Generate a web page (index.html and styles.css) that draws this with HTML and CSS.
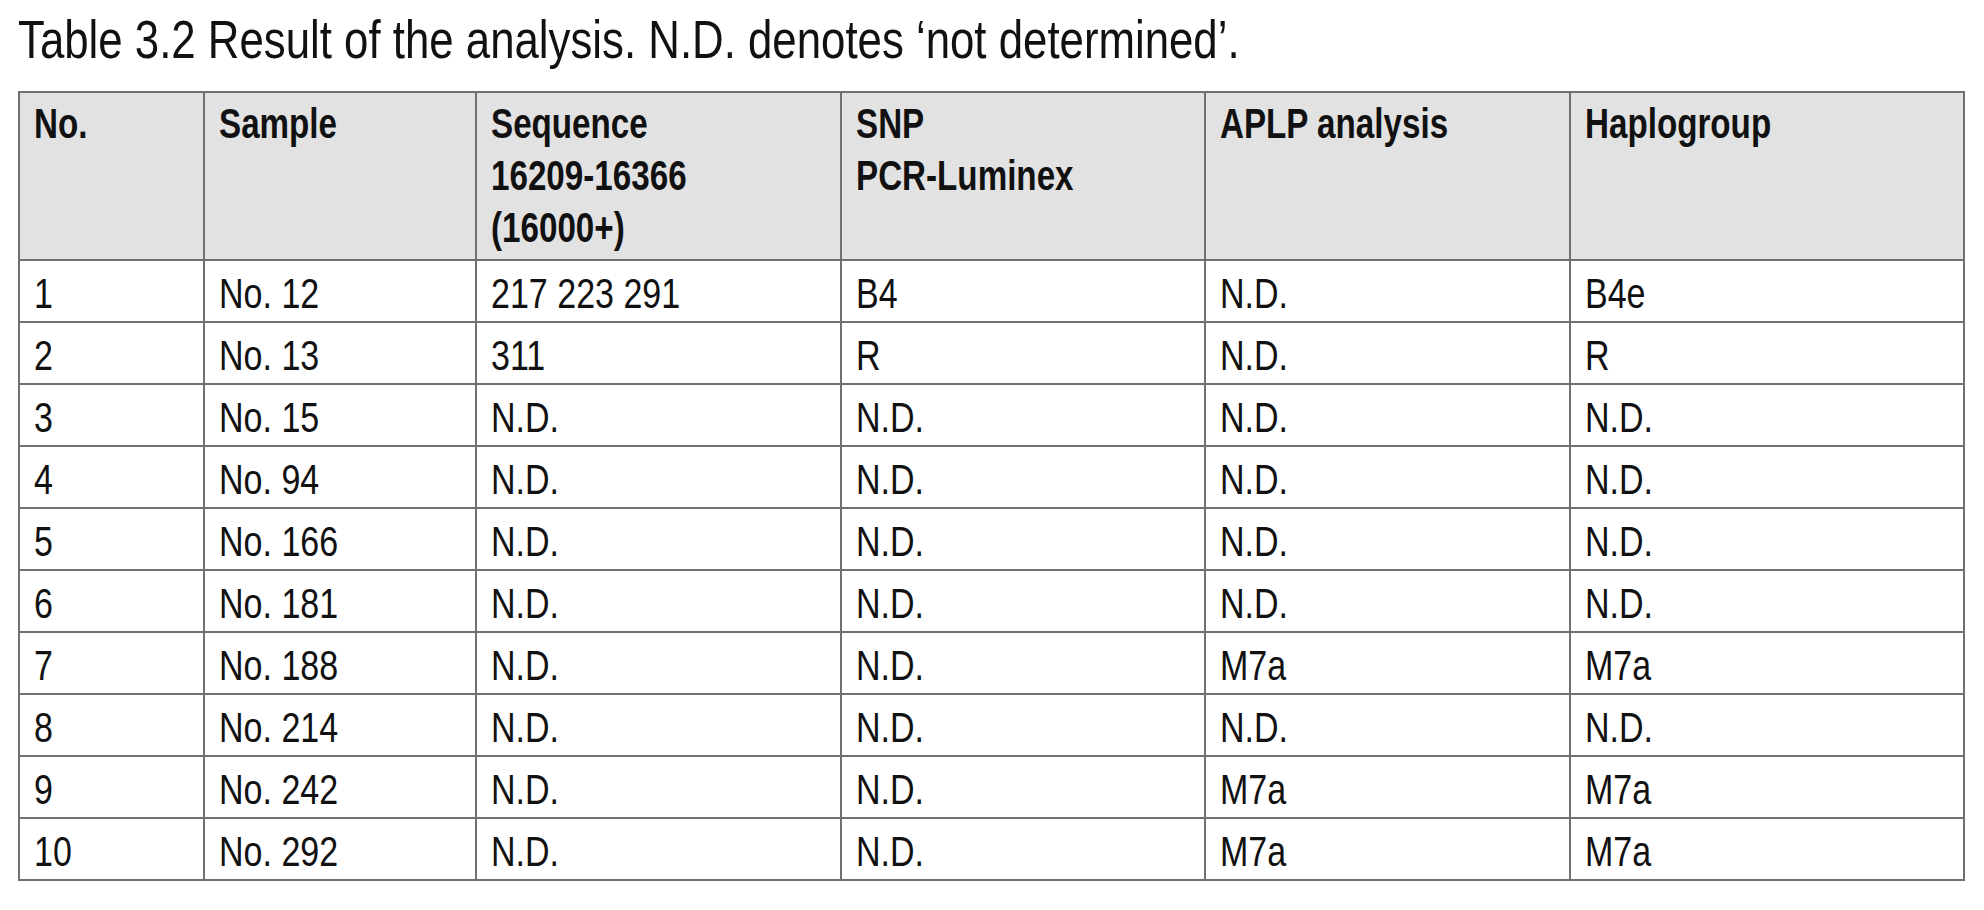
FILE: index.html
```html
<!DOCTYPE html>
<html lang="en">
<head>
<meta charset="utf-8">
<title>Table 3.2</title>
<link rel="stylesheet" href="styles.css">
</head>
<body>
<main class="page">
  <h1 class="caption"><span class="t">Table 3.2 Result of the analysis. N.D. denotes ‘not determined’.</span></h1>
  <table class="results">
    <colgroup>
      <col class="c-no">
      <col class="c-sample">
      <col class="c-seq">
      <col class="c-snp">
      <col class="c-aplp">
      <col class="c-hap">
    </colgroup>
    <thead>
      <tr>
        <th><span class="t">No.</span></th>
        <th><span class="t">Sample</span></th>
        <th><span class="t">Sequence<br>16209-16366<br>(16000+)</span></th>
        <th><span class="t">SNP<br>PCR-Luminex</span></th>
        <th><span class="t">APLP analysis</span></th>
        <th><span class="t">Haplogroup</span></th>
      </tr>
    </thead>
    <tbody>
      <tr><td><span class="t">1</span></td><td><span class="t">No. 12</span></td><td><span class="t">217 223 291</span></td><td><span class="t">B4</span></td><td><span class="t">N.D.</span></td><td><span class="t">B4e</span></td></tr>
      <tr><td><span class="t">2</span></td><td><span class="t">No. 13</span></td><td><span class="t">311</span></td><td><span class="t">R</span></td><td><span class="t">N.D.</span></td><td><span class="t">R</span></td></tr>
      <tr><td><span class="t">3</span></td><td><span class="t">No. 15</span></td><td><span class="t">N.D.</span></td><td><span class="t">N.D.</span></td><td><span class="t">N.D.</span></td><td><span class="t">N.D.</span></td></tr>
      <tr><td><span class="t">4</span></td><td><span class="t">No. 94</span></td><td><span class="t">N.D.</span></td><td><span class="t">N.D.</span></td><td><span class="t">N.D.</span></td><td><span class="t">N.D.</span></td></tr>
      <tr><td><span class="t">5</span></td><td><span class="t">No. 166</span></td><td><span class="t">N.D.</span></td><td><span class="t">N.D.</span></td><td><span class="t">N.D.</span></td><td><span class="t">N.D.</span></td></tr>
      <tr><td><span class="t">6</span></td><td><span class="t">No. 181</span></td><td><span class="t">N.D.</span></td><td><span class="t">N.D.</span></td><td><span class="t">N.D.</span></td><td><span class="t">N.D.</span></td></tr>
      <tr><td><span class="t">7</span></td><td><span class="t">No. 188</span></td><td><span class="t">N.D.</span></td><td><span class="t">N.D.</span></td><td><span class="t">M7a</span></td><td><span class="t">M7a</span></td></tr>
      <tr><td><span class="t">8</span></td><td><span class="t">No. 214</span></td><td><span class="t">N.D.</span></td><td><span class="t">N.D.</span></td><td><span class="t">N.D.</span></td><td><span class="t">N.D.</span></td></tr>
      <tr><td><span class="t">9</span></td><td><span class="t">No. 242</span></td><td><span class="t">N.D.</span></td><td><span class="t">N.D.</span></td><td><span class="t">M7a</span></td><td><span class="t">M7a</span></td></tr>
      <tr><td><span class="t">10</span></td><td><span class="t">No. 292</span></td><td><span class="t">N.D.</span></td><td><span class="t">N.D.</span></td><td><span class="t">M7a</span></td><td><span class="t">M7a</span></td></tr>
    </tbody>
  </table>
</main>
</body>
</html>
```

FILE: styles.css
```css
html, body {
  margin: 0;
  padding: 0;
  background: #ffffff;
}

.page {
  padding: 13px 0 0 18px;
  font-family: "Liberation Sans", Arial, sans-serif;
  color: #111111;
}

/* the original type is a condensed sans; narrow the glyphs horizontally */
.t {
  display: inline-block;
  transform: scaleX(0.81);
  transform-origin: left top;
}

.caption {
  margin: 0 0 25px 0;
  font-size: 53px;
  line-height: 53px;
  font-weight: normal;
  white-space: nowrap;
}

.caption .t {
  transform: scaleX(0.826);
}

.results {
  border-collapse: collapse;
  width: 1945px;
  table-layout: fixed;
  font-size: 42px;
  line-height: 52px;
}

.c-no { width: 185px; }
.c-sample { width: 272px; }
.c-seq { width: 365px; }
.c-snp { width: 364px; }
.c-aplp { width: 365px; }
.c-hap { width: 394px; }

.results th,
.results td {
  border: 2px solid #707070;
  text-align: left;
  vertical-align: top;
  padding: 7px 14px 1px 14px;
  white-space: nowrap;
}

.results th {
  background: #e2e2e2;
  font-weight: bold;
  padding: 5px 14px 5px 14px;
}

.results th .t {
  transform: scaleX(0.79);
}
```
